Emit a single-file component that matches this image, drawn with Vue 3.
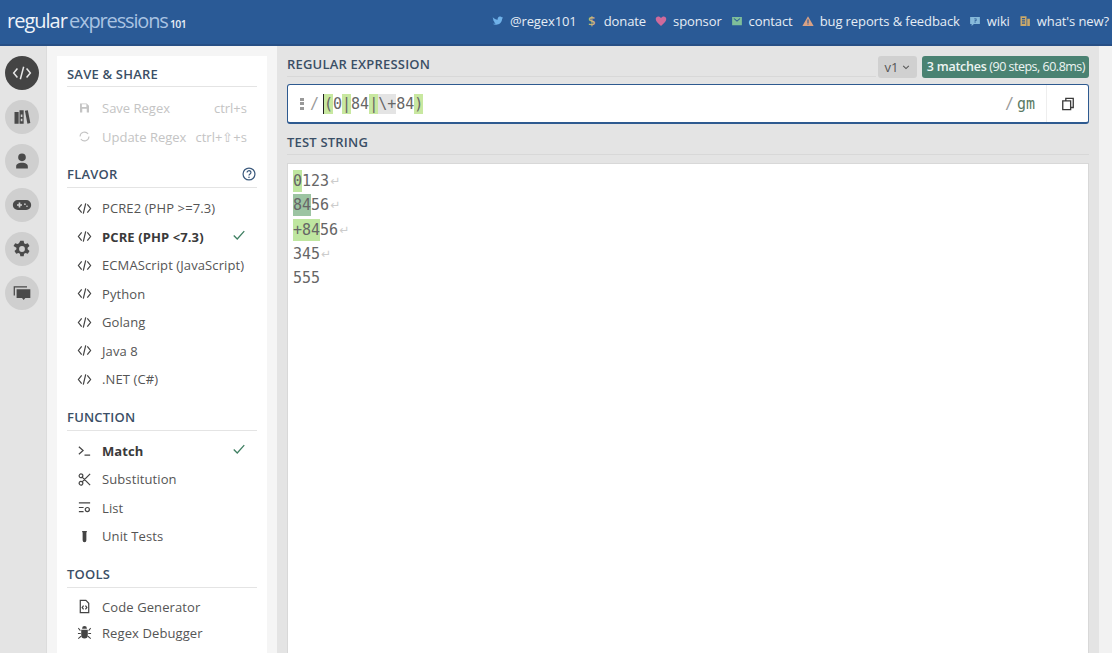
<script setup>
const links = [
  { t: '@regex101', c: '#6fb1e8', d: 'M1 3c2 2 4 3 6.500 3.200C7.200 3.500 9 1.500 11 2c.8.1 1.500.5 2 1l1.500-.5-1 1.500 1.300-.3-1.300 1.300C13.500 9 10 13 5.500 13 3.500 13 2 12.500 1 11.800c1.500.1 3-.3 4-1.200-1.300 0-2.300-.8-2.700-2h1.200C2.200 8.200 1.300 7 1.300 5.700l1.200.3C1.300 5 1 4 1 3z' },
  { t: 'donate', c: '#c9b47a', text: '$' },
  { t: 'sponsor', c: '#cf6a9b', d: 'M8 14.500C3 10.500 1 8 1 5.300 1 3.300 2.500 2 4.300 2 5.800 2 7.200 2.800 8 4c.8-1.200 2.200-2 3.700-2C13.500 2 15 3.300 15 5.300c0 2.700-2 5.200-7 9.200z' },
  { t: 'contact', c: '#7fbf9a', d: 'M1.500 2.500h13v11h-13zM3.500 5 8 9l4.500-4-.9-.8L8 7.300 4.400 4.200z' },
  { t: 'bug reports & feedback', c: '#d9a184', d: 'M8 1.500 15.500 14.500H.5zM7.200 6v4.500h1.600V6zM7.200 11.200v1.600h1.600v-1.600z' },
  { t: 'wiki', c: '#86b9da', d: 'M1.500 2.500h13v9.500H6.500l-3 2.500V12h-2zM7 4.500v1h2v1.500H7.500v2h1.200V8H10V4.500zM7.500 9.500v1h1.200v-1z' },
  { t: "what's new?", c: '#c9a86a', d: 'M2 1.500h8v13H2zM4 4v1.500h4V4zM4 7v1.500h4V7zM4 10v1.500h4V10zM11 5h3.500v9.500H11z' },
]
const rail = [
  { d: 'M6.500 6.500 2 12l4.500 5.500M17.500 6.500 22 12l-4.500 5.500M14 4.500 10 19.500', stroke: true, active: true },
  { d: 'M3 6h5v14H3zM9 4h5v16H9zM15.500 4.500l3.500-.7L22 19.300l-3.500.7zM10.500 9v3h2V9zM10.500 14v3h2v-3z' },
  { d: 'M12 3a4.600 4.600 0 1 1 0 9.200A4.600 4.600 0 0 1 12 3zM5 21v-2.500C5 15.500 8 14 12 14s7 1.500 7 4.500V21z' },
  { d: 'M7 6h10a6 6 0 0 1 0 12H7A6 6 0 0 1 7 6zM6 11v2h2v2h2v-2h2v-2h-2V9H8v2zM15.500 10a1 1 0 1 0 0 2 1 1 0 0 0 0-2zM18 12.500a1 1 0 1 0 0 2 1 1 0 0 0 0-2z' },
  { d: 'M10 2h4l.5 3 1.700 1 2.800-1 2 3.400-2.300 2 0 2 2.300 2-2 3.400-2.800-1-1.700 1-.5 3h-4l-.5-3-1.700-1-2.800 1-2-3.400 2.300-2v-2L1.800 8.400l2-3.400 2.800 1 1.700-1zM12 8.500a3.500 3.500 0 1 0 0 7 3.500 3.500 0 0 0 0-7z' },
  { d: 'M2 4h16v1.500H3.500V15H2zM5.500 7.500H22V18h-6l-2 2.500-2-2.500H5.500z' },
]
const flavors = [
  { t: 'PCRE2 (PHP >=7.3)' },
  { t: 'PCRE (PHP <7.3)', on: true },
  { t: 'ECMAScript (JavaScript)' },
  { t: 'Python' },
  { t: 'Golang' },
  { t: 'Java 8' },
  { t: '.NET (C#)' },
]
const codeIcon = 'M5 3.500 1.500 8 5 12.500M11 3.500 14.500 8 11 12.500M9.300 2.500 6.700 13.500'
const functions = [
  { t: 'Match', on: true, d: 'M2 4l4.500 4L2 12M8 13h6' },
  { t: 'Substitution', d: 'M14 2 5 11M14 14 5 5M5.500 2.500a2 2 0 1 1-3 2.500 2 2 0 0 1 3-2.500zM5.500 13.500a2 2 0 1 0-3-2.500 2 2 0 0 0 3 2.500z' },
  { t: 'List', d: 'M2 3h12M2 8h5M2 12.500h5M11 8a2.200 2.200 0 1 0 0 4.400 2.200 2.200 0 0 0 0-4.400z' },
  { t: 'Unit Tests', d: 'M5.500 2h5v1.500h-.5V12a2 2 0 0 1-4 0V3.500h-.5z', fill: true },
]
const tools = [
  { t: 'Code Generator', d: 'M3.500 1.500h6l3 3v10h-9zM7 7 5.500 9 7 11M9 7l1.500 2L9 11' },
  { t: 'Regex Debugger', d: 'M5.500 3.500a2.500 2.500 0 0 1 5 0v.5h-5zM4.500 5h7v6a3.500 3.500 0 0 1-7 0zM1.800 3 4 5.500l-.8.800L1 3.800zM14.200 3 12 5.500l.8.800 2.200-2.500zM1 8.500h3v1.200H1zM12 8.500h3v1.200h-3zM1 14l3-2.500.6.900-2.900 2.500zM15 14l-3-2.500-.6.900 2.900 2.500z', fill: true },
]
</script>

<template>
  <div class="page">
    <header class="top">
      <div class="logo"><b>regular</b> <span>expressions</span> <small>101</small></div>
      <nav class="links">
        <a v-for="l in links" :key="l.t" class="link">
          <span v-if="l.text" class="dollar" :style="{ color: l.c }">{{ l.text }}</span>
          <svg v-else viewBox="0 0 16 16" width="12" height="12" fill-rule="evenodd"><path :d="l.d" :fill="l.c" /></svg>
          {{ l.t }}
        </a>
      </nav>
    </header>
    <div class="body">
      <aside class="rail">
        <div v-for="(r, i) in rail" :key="i" class="round" :class="{ active: r.active }">
          <svg viewBox="0 0 24 24" width="20" height="20" fill-rule="evenodd">
            <path v-if="r.stroke" :d="r.d" fill="none" stroke="#e8e8e8" stroke-width="1.800" />
            <path v-else :d="r.d" fill="#4a4a4a" />
          </svg>
        </div>
      </aside>
      <div class="sidewrap">
        <section class="card">
          <h3 class="first">SAVE &amp; SHARE</h3>
          <ul class="muted">
            <li>
              <svg viewBox="0 0 16 16" width="12" height="12" fill-rule="evenodd"><path d="M2 2h9l3 3v9H2zM4.500 3v3.500h6V3zM5 9v5h6V9z" fill="#c4c4c4" /></svg>
              <span class="label">Save Regex</span><kbd>ctrl+s</kbd>
            </li>
            <li class="second">
              <svg viewBox="0 0 16 16" width="13" height="13"><path d="M13.500 8A5.500 5.500 0 0 1 3.500 11M2.500 8A5.500 5.500 0 0 1 12.500 5" fill="none" stroke="#c4c4c4" stroke-width="1.300" /></svg>
              <span class="label">Update Regex</span><kbd>ctrl+⇧+s</kbd>
            </li>
          </ul>
          <h3 class="help">FLAVOR
            <svg viewBox="0 0 16 16" width="14" height="14"><circle cx="8" cy="8" r="6.800" fill="none" stroke="#3c5a7d" stroke-width="1.400" /><path d="M5.800 6.200a2.200 2 0 1 1 3.400 1.700C8.300 8.500 8 8.900 8 9.800" fill="none" stroke="#3c5a7d" stroke-width="1.400" /><circle cx="8" cy="11.800" r=".9" fill="#3c5a7d" /></svg>
          </h3>
          <ul class="list">
            <li v-for="f in flavors" :key="f.t" :class="{ on: f.on }">
              <svg viewBox="0 0 16 16" width="15" height="15"><path :d="codeIcon" fill="none" stroke="#444" stroke-width="1.300" /></svg>
              <span class="label">{{ f.t }}</span>
              <svg v-if="f.on" class="check" viewBox="0 0 16 16" width="14" height="14"><path d="M2 8.500 6 12.500 14 3.500" fill="none" stroke="#3f7f62" stroke-width="1.500" /></svg>
            </li>
          </ul>
          <h3>FUNCTION</h3>
          <ul class="list">
            <li v-for="f in functions" :key="f.t" :class="{ on: f.on }">
              <svg viewBox="0 0 16 16" width="15" height="15"><path :d="f.d" :fill="f.fill ? '#444' : 'none'" :stroke="f.fill ? 'none' : '#444'" stroke-width="1.300" /></svg>
              <span class="label">{{ f.t }}</span>
              <svg v-if="f.on" class="check" viewBox="0 0 16 16" width="14" height="14"><path d="M2 8.500 6 12.500 14 3.500" fill="none" stroke="#3f7f62" stroke-width="1.500" /></svg>
            </li>
          </ul>
          <h3>TOOLS</h3>
          <ul class="list tools">
            <li v-for="f in tools" :key="f.t">
              <svg viewBox="0 0 16 16" width="15" height="15"><path :d="f.d" :fill="f.fill ? '#444' : 'none'" :stroke="f.fill ? 'none' : '#444'" stroke-width="1.300" /></svg>
              <span class="label">{{ f.t }}</span>
            </li>
          </ul>
        </section>
      </div>
      <main class="main">
        <div class="head-row">
          <h3 class="title">REGULAR EXPRESSION</h3>
          <div class="version">v1
            <svg viewBox="0 0 10 10" width="8" height="8"><path d="M1.500 3.500 5 7l3.500-3.500" fill="none" stroke="#555" stroke-width="1.300" /></svg>
          </div>
          <div class="matches"><b>3 matches</b> (90 steps, 60.8ms)</div>
        </div>
        <div class="regex">
          <span class="grip"><i></i><i></i><i></i></span>
          <span class="slash">/</span>
          <span class="expr"><span class="caret"></span><em>(</em>0<em>|</em>84<em>|</em><u>\+</u>84<em>)</em></span>
          <span class="flags"><span class="slash">/</span>gm</span>
          <span class="copy">
            <svg viewBox="0 0 16 16" width="14" height="14"><path d="M5.500 4V1.500h8.500V12H11M2 4.500h9v10H2z" fill="none" stroke="#3a3a3a" stroke-width="1.500" /></svg>
          </span>
        </div>
        <h3 class="title test">TEST STRING</h3>
        <div class="test-box">
          <div class="ln"><mark class="m1">0</mark>123<span class="nl">↵</span></div>
          <div class="ln"><mark class="m2">84</mark>56<span class="nl">↵</span></div>
          <div class="ln"><mark class="m1">+84</mark>56<span class="nl">↵</span></div>
          <div class="ln">345<span class="nl">↵</span></div>
          <div class="ln">555</div>
        </div>
      </main>
      <div class="gutter"></div>
    </div>
  </div>
</template>

<style>
html, body { margin: 0; overflow: hidden; }
</style>

<style scoped>
.page { width: 1112px; height: 653px; overflow: hidden; font-family: "Open Sans", sans-serif; display: flex; flex-direction: column; background: #e4e4e4; }
.top { height: 46px; flex: none; box-sizing: border-box; background: #2a5a96; border-bottom: 2px solid #274f85; display: flex; align-items: center; justify-content: space-between; padding-left: 7px; color: #e6edf5; }
.logo { font-size: 20px; letter-spacing: -1px; word-spacing: -2px; white-space: nowrap; margin-top: -3px; }
.logo b { font-weight: 400; color: #eef3f9; }
.logo span { color: #a9c3e2; letter-spacing: -1.150px; }
.logo small { font-size: 10.500px; font-weight: 600; color: #e6edf5; letter-spacing: -.6px; }
.links { display: flex; font-size: 13px; letter-spacing: -.1px; white-space: nowrap; margin-right: 3px; margin-top: -3px; }
.link { display: flex; align-items: center; gap: 6px; margin-left: 9px; }
.dollar { font-size: 13px; width: 12px; text-align: center; font-weight: 600; }
.body { flex: 1; display: flex; min-height: 0; }
.rail { padding-left: 5px; padding-top: 10px; background: #e4e4e4; border-right: 1px solid #dcdcdc; width: 41px; display: flex; flex-direction: column; gap: 10px; }
.round { width: 34px; height: 34px; border-radius: 50%; background: #cfcfcf; display: flex; align-items: center; justify-content: center; }
.round.active { background: #444; }
.sidewrap { width: 230px; flex: none; box-sizing: border-box; padding: 10px 10px 0; background: #f5f5f5; }
.card { background: #fff; height: 100%; padding: 0 10px; box-sizing: border-box; color: #444; }
h3 { margin: 0; font-size: 13px; font-weight: 600; color: #3b4f66; letter-spacing: .2px; }
.card h3 { height: 20px; line-height: 18px; margin-top: 13px; border-bottom: 1px solid #e4e4e4; box-sizing: content-box; display: flex; justify-content: space-between; align-items: center; padding-bottom: 3px; }
.card h3.first { margin-top: 0; padding-top: 8px; padding-bottom: 2px; }
.card h3.help { margin-top: 13px; }
.card h3.help svg { margin-right: 1px; }
ul { list-style: none; margin: 0; padding: 0; }
.muted { padding-top: 6px; }
.muted li { height: 29px; display: flex; align-items: center; font-size: 13px; color: #c4c4c4; padding-left: 11px; }
.muted svg { width: 13px; margin-right: 11px; }
.muted .label { flex: 1; white-space: nowrap; }
kbd { font-family: inherit; font-size: 13px; margin-right: 10px; }
.list { padding-top: 6px; }
.list li { height: 28.500px; display: flex; align-items: center; font-size: 13px; color: #555; padding-left: 10px; white-space: nowrap; }
.list svg:first-child { margin-right: 10px; flex: none; }
.list .label { flex: 1; letter-spacing: .1px; }
.list li.on { font-weight: 700; color: #3a3a3a; }
.check { margin-right: 11px; margin-top: -3px; }
.tools li { height: 26px; }
.main { flex: 1; min-width: 0; padding: 8px 10px 0 10px; display: flex; flex-direction: column; }
.head-row { display: flex; align-items: flex-start; height: 25px; }
.title { flex: 1; line-height: 20px; height: 23px; box-sizing: border-box; border-bottom: 1px solid #d8d8d8; }
.version { width: 39px; height: 22px; margin-top: 2px; margin-left: 2px; box-sizing: border-box; background: #d0d0d0; border-radius: 3px; font-size: 13px; color: #555; display: flex; align-items: center; justify-content: center; gap: 4px; margin-right: 5px; }
.matches { background: #4a8272; color: #eef5f2; font-size: 12.500px; height: 22px; margin-top: 2px; line-height: 21px; border-radius: 3px; padding: 0 4px 0 5px; letter-spacing: -.5px; white-space: nowrap; }
.matches b { font-weight: 600; letter-spacing: -.25px; }
.regex { margin-top: 5px; height: 40px; box-sizing: border-box; background: #fff; border: 2px solid #2e5a90; border-width: 1px 1px 2px; border-radius: 3px; display: flex; align-items: center; font-family: "DejaVu Sans Mono", monospace; font-size: 15px; color: #666; padding-left: 12px; }
.grip { width: 4px; display: flex; flex-direction: column; gap: 1.500px; margin-right: 6px; }
.grip i { width: 4px; height: 3px; background: #999; }
.slash { color: #999; font-weight: 400; }
.expr { flex: 1; margin-left: 5px; margin-top: 1px; display: flex; position: relative; height: 20px; line-height: 20px; }
.expr em { font-style: normal; background: #c8e8a0; width: 9px; text-align: center; }
.expr u { text-decoration: none; background: #e4e4e4; }
.caret { position: absolute; left: -1px; top: 0; width: 1px; height: 20px; background: #222; }
.flags { margin-right: 11px; color: #5a7a64; }
.flags .slash { margin-right: 3px; }
.copy { width: 41px; align-self: stretch; border-left: 1px solid #eee; display: flex; align-items: center; justify-content: center; }
.title.test { flex: none; margin-top: 8px; height: 23px; }
.test-box { flex: 1; margin-top: 8px; background: #fff; border: 1px solid #d8d8d8; border-bottom: 0; font-family: "DejaVu Sans Mono", monospace; font-size: 15px; color: #666; padding: 5px 5px; }
.ln { height: 24.300px; display: flex; align-items: center; }
mark { color: inherit; height: 22px; line-height: 22px; }
.m1 { background: #bfe6a0; }
.m2 { background: #9cc4a2; }
.nl { color: #ccc; font-size: 12px; font-family: "DejaVu Sans", sans-serif; margin-left: 1px; }
.gutter { width: 13px; flex: none; background: #f2f2f2; }
</style>
